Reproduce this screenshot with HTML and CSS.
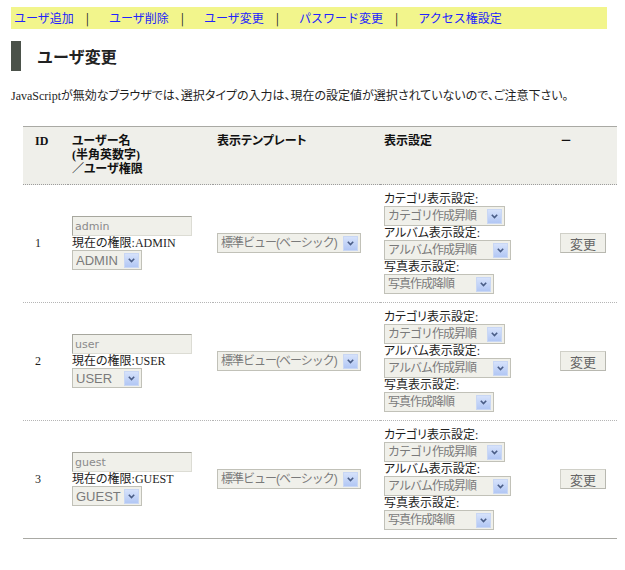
FILE: index.html
```html
<!DOCTYPE html>
<html lang="ja">
<head>
<meta charset="utf-8">
<title>ユーザ変更</title>
<link rel="stylesheet" href="styles.css">
</head>
<body>
<div class="nav">
  <a href="#">ユーザ追加</a><span class="sep">|</span>
  <a href="#">ユーザ削除</a><span class="sep">|</span>
  <a href="#">ユーザ変更</a><span class="sep">|</span>
  <a href="#">パスワード変更</a><span class="sep">|</span>
  <a href="#">アクセス権設定</a>
</div>
<h2 class="title">ユーザ変更</h2>
<p class="note">JavaScriptが無効なブラウザでは、選択タイプの入力は、現在の設定値が選択されていないので、ご注意下さい。</p>
<table class="users">
  <colgroup><col class="c1"><col class="c2"><col class="c3"><col class="c4"><col class="c5"></colgroup>
  <thead>
    <tr><th class="id">ID</th><th>ユーザー名<br>(半角英数字)<br>／ユーザ権限</th><th>表示テンプレート</th><th>表示設定</th><th>－</th></tr>
  </thead>
  <tbody>
    <tr>
      <td class="id">1</td>
      <td><div class="stack">
        <input class="txt" type="text" value="admin">
        <span class="lbl">現在の権限:ADMIN</span>
        <span class="sel w-role"><select><option>ADMIN</option></select><span class="arr"><svg width="7" height="5" viewBox="0 0 7 5"><path d="M0.8 0.8 L3.5 3.6 L6.2 0.8" fill="none" stroke="#4a5d86" stroke-width="1.6"/></svg></span></span>
      </div></td>
      <td><span class="sel w-tpl jp"><select><option>標準ビュー(ベーシック)</option></select><span class="arr"><svg width="7" height="5" viewBox="0 0 7 5"><path d="M0.8 0.8 L3.5 3.6 L6.2 0.8" fill="none" stroke="#4a5d86" stroke-width="1.6"/></svg></span></span></td>
      <td><div class="stack">
        <span class="lbl">カテゴリ表示設定:</span>
        <span class="sel w-cat jp"><select><option>カテゴリ作成昇順</option></select><span class="arr"><svg width="7" height="5" viewBox="0 0 7 5"><path d="M0.8 0.8 L3.5 3.6 L6.2 0.8" fill="none" stroke="#4a5d86" stroke-width="1.6"/></svg></span></span>
        <span class="lbl">アルバム表示設定:</span>
        <span class="sel w-alb jp"><select><option>アルバム作成昇順</option></select><span class="arr"><svg width="7" height="5" viewBox="0 0 7 5"><path d="M0.8 0.8 L3.5 3.6 L6.2 0.8" fill="none" stroke="#4a5d86" stroke-width="1.6"/></svg></span></span>
        <span class="lbl">写真表示設定:</span>
        <span class="sel w-pho jp"><select><option>写真作成降順</option></select><span class="arr"><svg width="7" height="5" viewBox="0 0 7 5"><path d="M0.8 0.8 L3.5 3.6 L6.2 0.8" fill="none" stroke="#4a5d86" stroke-width="1.6"/></svg></span></span>
      </div></td>
      <td><button class="btn" type="button">変更</button></td>
    </tr>
    <tr>
      <td class="id">2</td>
      <td><div class="stack">
        <input class="txt" type="text" value="user">
        <span class="lbl">現在の権限:USER</span>
        <span class="sel w-role"><select><option>USER</option></select><span class="arr"><svg width="7" height="5" viewBox="0 0 7 5"><path d="M0.8 0.8 L3.5 3.6 L6.2 0.8" fill="none" stroke="#4a5d86" stroke-width="1.6"/></svg></span></span>
      </div></td>
      <td><span class="sel w-tpl jp"><select><option>標準ビュー(ベーシック)</option></select><span class="arr"><svg width="7" height="5" viewBox="0 0 7 5"><path d="M0.8 0.8 L3.5 3.6 L6.2 0.8" fill="none" stroke="#4a5d86" stroke-width="1.6"/></svg></span></span></td>
      <td><div class="stack">
        <span class="lbl">カテゴリ表示設定:</span>
        <span class="sel w-cat jp"><select><option>カテゴリ作成昇順</option></select><span class="arr"><svg width="7" height="5" viewBox="0 0 7 5"><path d="M0.8 0.8 L3.5 3.6 L6.2 0.8" fill="none" stroke="#4a5d86" stroke-width="1.6"/></svg></span></span>
        <span class="lbl">アルバム表示設定:</span>
        <span class="sel w-alb jp"><select><option>アルバム作成昇順</option></select><span class="arr"><svg width="7" height="5" viewBox="0 0 7 5"><path d="M0.8 0.8 L3.5 3.6 L6.2 0.8" fill="none" stroke="#4a5d86" stroke-width="1.6"/></svg></span></span>
        <span class="lbl">写真表示設定:</span>
        <span class="sel w-pho jp"><select><option>写真作成降順</option></select><span class="arr"><svg width="7" height="5" viewBox="0 0 7 5"><path d="M0.8 0.8 L3.5 3.6 L6.2 0.8" fill="none" stroke="#4a5d86" stroke-width="1.6"/></svg></span></span>
      </div></td>
      <td><button class="btn" type="button">変更</button></td>
    </tr>
    <tr>
      <td class="id">3</td>
      <td><div class="stack">
        <input class="txt" type="text" value="guest">
        <span class="lbl">現在の権限:GUEST</span>
        <span class="sel w-role"><select><option>GUEST</option></select><span class="arr"><svg width="7" height="5" viewBox="0 0 7 5"><path d="M0.8 0.8 L3.5 3.6 L6.2 0.8" fill="none" stroke="#4a5d86" stroke-width="1.6"/></svg></span></span>
      </div></td>
      <td><span class="sel w-tpl jp"><select><option>標準ビュー(ベーシック)</option></select><span class="arr"><svg width="7" height="5" viewBox="0 0 7 5"><path d="M0.8 0.8 L3.5 3.6 L6.2 0.8" fill="none" stroke="#4a5d86" stroke-width="1.6"/></svg></span></span></td>
      <td><div class="stack">
        <span class="lbl">カテゴリ表示設定:</span>
        <span class="sel w-cat jp"><select><option>カテゴリ作成昇順</option></select><span class="arr"><svg width="7" height="5" viewBox="0 0 7 5"><path d="M0.8 0.8 L3.5 3.6 L6.2 0.8" fill="none" stroke="#4a5d86" stroke-width="1.6"/></svg></span></span>
        <span class="lbl">アルバム表示設定:</span>
        <span class="sel w-alb jp"><select><option>アルバム作成昇順</option></select><span class="arr"><svg width="7" height="5" viewBox="0 0 7 5"><path d="M0.8 0.8 L3.5 3.6 L6.2 0.8" fill="none" stroke="#4a5d86" stroke-width="1.6"/></svg></span></span>
        <span class="lbl">写真表示設定:</span>
        <span class="sel w-pho jp"><select><option>写真作成降順</option></select><span class="arr"><svg width="7" height="5" viewBox="0 0 7 5"><path d="M0.8 0.8 L3.5 3.6 L6.2 0.8" fill="none" stroke="#4a5d86" stroke-width="1.6"/></svg></span></span>
      </div></td>
      <td><button class="btn" type="button">変更</button></td>
    </tr>
  </tbody>
</table>
</body>
</html>
```
FILE: styles.css
```css
html, body { background: #ffffff; }
body {
  margin: 0;
  padding: 7px 18px 0 11px;
  font: 12px/14px "Liberation Serif", "Noto Sans CJK JP", serif;
  color: #1e1e1e;
  font-feature-settings: "palt";
}

.nav {
  background: #f2f58c;
  height: 22px;
  display: flex;
  align-items: center;
  padding-left: 3px;
  font-family: "Noto Sans CJK JP", sans-serif;
  font-size: 12px;
  font-feature-settings: normal;
}
.nav a { color: #2323ff; text-decoration: none; }
.sep { color: #222; margin: 0 20px 0 12px; }

.title {
  margin: 12px 0 0;
  height: 30px;
  display: flex;
  align-items: center;
  border-left: 10px solid #4b524a;
  padding-left: 16px;
  font: bold 16px "Liberation Serif", "Noto Sans CJK JP", serif;
  color: #222;
  font-feature-settings: normal;
}

.note {
  margin: 18px 0 0;
  line-height: 14px;
  white-space: nowrap;
}

.users {
  margin: 23px 0 0 12px;
  width: 594px;
  border-collapse: collapse;
  table-layout: fixed;
  border-top: 1px solid #a9a9a4;
  border-bottom: 1px solid #a9a9a4;
}
.c1 { width: 45px; }
.c2 { width: 145px; }
.c3 { width: 167px; }
.c4 { width: 176px; }
.c5 { width: 61px; }

.users th {
  background: #efefea;
  text-align: left;
  vertical-align: top;
  padding: 7px 4px 8px;
  line-height: 14px;
  font-weight: bold;
  color: #111;
  border-bottom: 1px dotted #9c9c9c;
}
.users td {
  padding: 7px 4px 8px;
  vertical-align: middle;
  border-bottom: 1px dotted #b5b5b5;
}
.users tbody tr:last-child td { border-bottom: 1px solid #a9a9a4; }
.users .id { padding-left: 12px; }

.stack {
  display: flex;
  flex-direction: column;
  align-items: flex-start;
}
.lbl { display: block; line-height: 14px; height: 14px; white-space: nowrap; }

.txt {
  box-sizing: border-box;
  width: 120px;
  height: 20px;
  margin: 0;
  padding: 0 2px;
  border: 1px solid;
  border-color: #a7a79e #dcdcd4 #dcdcd4 #a7a79e;
  background: #f0f0ea;
  font: 11px "DejaVu Sans", sans-serif;
  color: #8a8a8a;
  outline: none;
}

.sel {
  display: inline-flex;
  align-items: center;
  box-sizing: border-box;
  height: 20px;
  border: 1px solid #c1c1b8;
  background: #f0f0ea;
}
.sel select {
  appearance: none;
  -webkit-appearance: none;
  flex: 1;
  min-width: 0;
  height: 18px;
  border: 0;
  margin: 0;
  padding: 0 0 0 3px;
  background: transparent;
  font: 13px "Liberation Sans", "Noto Sans CJK JP", sans-serif;
  color: #7a7a7a;
  outline: none;
}
.sel.jp select {
  font-size: 12px;
  letter-spacing: -1px;
}
.arr {
  box-sizing: border-box;
  width: 15px;
  height: 15px;
  margin-right: 2px;
  border: 1px solid #c9d7f4;
  background: linear-gradient(#d6e2fb, #b2c7f4);
  display: flex;
  align-items: center;
  justify-content: center;
}
.w-role { width: 70px; }
.w-tpl { width: 144px; }
.w-cat { width: 121px; }
.w-alb { width: 127px; }
.w-pho { width: 110px; }

.btn {
  box-sizing: border-box;
  width: 46px;
  height: 20px;
  margin: 0;
  padding: 0;
  border: 1px solid;
  border-color: #d0d0c8 #b8b8b0 #b8b8b0 #d0d0c8;
  background: #f0f0ea;
  font: 13px "Noto Sans CJK JP", sans-serif;
  color: #666;
}
```
